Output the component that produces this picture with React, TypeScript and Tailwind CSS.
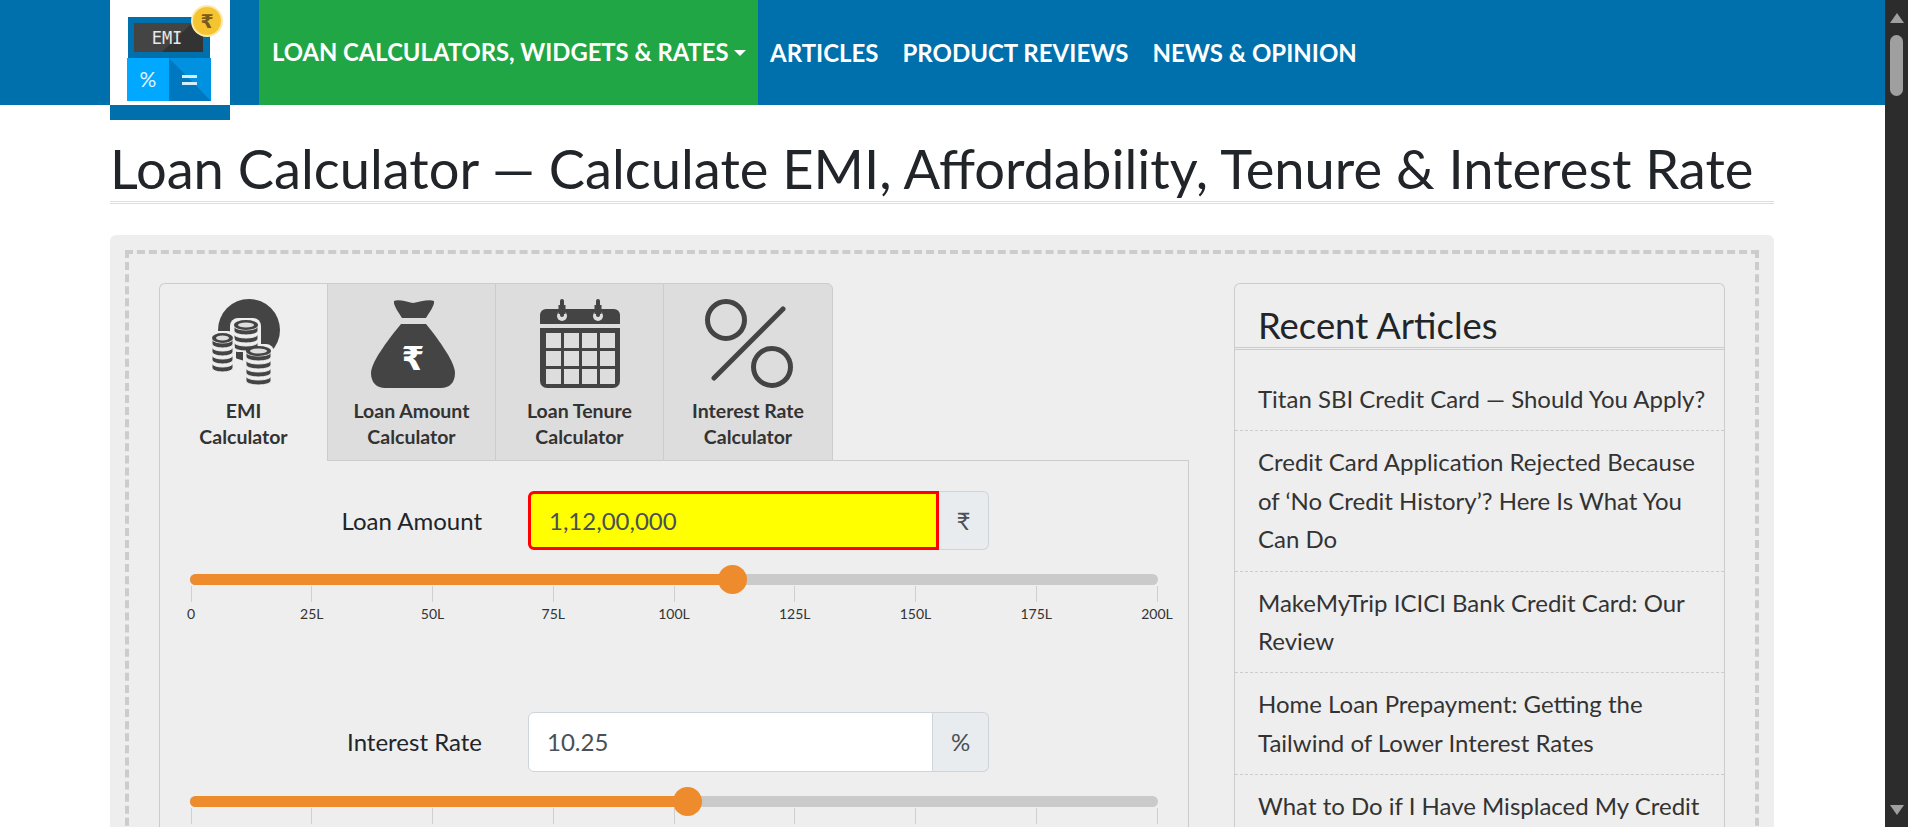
const tabs = [
  { id: 'emi', lines: ['EMI', 'Calculator'] },
  { id: 'amount', lines: ['Loan Amount', 'Calculator'] },
  { id: 'tenure', lines: ['Loan Tenure', 'Calculator'] },
  { id: 'rate', lines: ['Interest Rate', 'Calculator'] },
];

const articles = [
  'Titan SBI Credit Card — Should You Apply?',
  'Credit Card Application Rejected Because of ‘No Credit History’? Here Is What You Can Do',
  'MakeMyTrip ICICI Bank Credit Card: Our Review',
  'Home Loan Prepayment: Getting the Tailwind of Lower Interest Rates',
  'What to Do if I Have Misplaced My Credit Card?',
];

const ticks = ['0', '25L', '50L', '75L', '100L', '125L', '150L', '175L', '200L'];

function Logo() {
  return (
    <svg viewBox="0 0 120 105" className="w-[120px] h-[105px] block">
      <rect x="18" y="17" width="82" height="42" fill="#0070ad" />
      <rect x="24" y="23" width="69" height="29" fill="#444444" />
      <polygon points="93,23 93,52 52,52 82,23" fill="#333333" />
      <text x="57" y="44" textAnchor="middle" fontFamily="'DejaVu Sans Mono', monospace" fontSize="17" fill="#e8e8e8">EMI</text>
      <rect x="17" y="58" width="42" height="43" fill="#00a8ff" />
      <rect x="59" y="58" width="42" height="43" fill="#0092e0" />
      <polygon points="59,58 101,101 59,101" fill="#0078c0" />
      <text x="38" y="87" textAnchor="middle" fontFamily="Lato, sans-serif" fontSize="21" fill="#e6f6ff">%</text>
      <rect x="72" y="75" width="15" height="3" fill="#d6eefc" />
      <rect x="72" y="82" width="15" height="3" fill="#d6eefc" />
      <circle cx="97" cy="21" r="16" fill="#fdeaa8" />
      <circle cx="97" cy="21" r="14" fill="#f7c431" />
      <text x="97" y="28" textAnchor="middle" fontFamily="'DejaVu Sans', sans-serif" fontWeight="700" fontSize="19" fill="#7a5a1e">₹</text>
    </svg>
  );
}

function CoinStack({ x, y, w, coins }: { x: number; y: number; w: number; coins: number }) {
  const rx = w / 2;
  const cx = x + rx;
  const rows = Array.from({ length: coins }, (_, i) => coins - 1 - i);
  return (
    <g>
      {rows.map((i) => (
        <g key={i}>
          <rect x={x - 1.5} y={y + 5 + i * 8} width={w + 3} height="9" fill="#eeeeee" />
          <path
            d={`M${x} ${y + 6 + i * 8} v5 a${rx} 4 0 0 0 ${w} 0 v-5 a${rx} 4 0 0 1 -${w} 0 Z`}
            fill="#444444"
            stroke="#eeeeee"
            strokeWidth="1"
          />
        </g>
      ))}
      <ellipse cx={cx} cy={y + 5} rx={rx} ry="5" fill="#444444" />
      <ellipse cx={cx} cy={y + 5} rx={rx - 4} ry="2.6" fill="#dddddd" />
    </g>
  );
}

function CoinsIcon() {
  return (
    <svg viewBox="0 0 90 90" className="w-[90px] h-[90px]">
      <circle cx="50" cy="31" r="31" fill="#444444" />
      <rect x="31" y="19" width="31" height="34" rx="8" fill="#eeeeee" />
      <rect x="10" y="32" width="27" height="42" rx="8" fill="#eeeeee" />
      <rect x="44" y="45" width="31" height="45" rx="8" fill="#eeeeee" />
      <CoinStack x={35} y={21} w={24} coins={3} />
      <CoinStack x={13} y={34} w={21} coins={4} />
      <CoinStack x={47} y={47} w={25} coins={4} />
    </svg>
  );
}

function BagIcon() {
  return (
    <svg viewBox="0 0 90 90" className="w-[90px] h-[90px]">
      <path d="M27 2 C32 0 40 3 46 4 C52 3 62 0 67 2 C68 6 62 14 59 19 L35 19 C32 14 26 6 27 2 Z" fill="#444444" />
      <path d="M34 25 L59 25 C68 36 88 62 88 74 C88 84 82 89 74 89 L18 89 C10 89 4 84 4 74 C4 62 25 36 34 25 Z" fill="#444444" />
      <text x="46" y="71" textAnchor="middle" fontFamily="'DejaVu Sans', sans-serif" fontWeight="700" fontSize="33" fill="#ffffff">₹</text>
    </svg>
  );
}

function CalendarIcon() {
  const cols = [11, 29, 47, 65];
  const rows = [34, 52, 70];
  return (
    <svg viewBox="0 0 90 90" className="w-[90px] h-[90px]">
      <path d="M5 25 V16 a6 6 0 0 1 6 -6 H79 a6 6 0 0 1 6 6 V25 Z" fill="#444444" />
      <path d="M5 29 H85 V82 a7 7 0 0 1 -7 7 H12 a7 7 0 0 1 -7 -7 Z" fill="#444444" />
      {rows.map((r) =>
        cols.map((c) => <rect key={`${r}-${c}`} x={c} y={r} width="15" height="15" fill="#dddddd" />),
      )}
      {[27, 63].map((x) => (
        <g key={x}>
          <circle cx={x} cy="17" r="5" fill="#dddddd" />
          <rect x={x - 3.5} y="6" width="7" height="9" fill="#444444" />
          <rect x={x - 2} y="0" width="4" height="18" rx="2" fill="#444444" />
        </g>
      ))}
    </svg>
  );
}

function PercentIcon() {
  return (
    <svg viewBox="0 0 90 90" className="w-[90px] h-[90px]" fill="none" stroke="#444444" strokeWidth="5">
      <circle cx="23" cy="21" r="18.5" />
      <circle cx="69" cy="68" r="18.5" />
      <line x1="80" y1="10" x2="11" y2="79" strokeLinecap="round" />
    </svg>
  );
}

function TabIcon({ id }: { id: string }) {
  if (id === 'emi') return <CoinsIcon />;
  if (id === 'amount') return <BagIcon />;
  if (id === 'tenure') return <CalendarIcon />;
  return <PercentIcon />;
}

function tabClass(i: number) {
  if (i === 0) {
    return 'w-[168px] h-[178px] pt-[15px] bg-[#eeeeee] border-t border-l border-[#cccccc] rounded-tl-[6px] flex flex-col items-center';
  }
  if (i === 3) {
    return 'w-[170px] h-[178px] pt-[15px] bg-[#dddddd] border border-[#cccccc] rounded-tr-[6px] flex flex-col items-center';
  }
  return 'w-[168px] h-[178px] pt-[15px] bg-[#dddddd] border-t border-l border-b border-[#cccccc] flex flex-col items-center';
}

function Slider({ value, labels }: { value: number; labels: boolean }) {
  return (
    <div className="mt-[24px] w-[968px] ml-[30px]">
      <div className="relative h-[11px] rounded-full bg-[#cacaca]">
        <div className="h-full rounded-full bg-[#ee8b2d]" style={{ width: `${value}%` }} />
        <div
          className="absolute top-[-9px] w-[29px] h-[29px] -ml-[14px] rounded-full bg-[#ee8b2d]"
          style={{ left: `${value}%` }}
        />
      </div>
      <div className="flex justify-between px-[1px] mt-[1px]">
        {ticks.map((t) => (
          <div key={t} className="w-0 flex flex-col items-center">
            <div className="w-[1px] h-[16px] bg-[#cfcfcf] shrink-0" />
            {labels && <div className="mt-[3px] text-[14px] leading-[18px] text-[#333333]">{t}</div>}
          </div>
        ))}
      </div>
    </div>
  );
}

export default function App() {
  return (
    <div className="flex h-[827px] overflow-hidden bg-white font-[Lato,sans-serif] text-[#212529]">
      <div className="flex-1 min-w-0">
        <header className="h-[105px] bg-[#0070ad] pl-[110px] flex items-start">
          <div className="w-[120px] h-[120px] bg-[#0070ad] shrink-0 relative z-10">
            <div className="bg-white h-[105px]">
              <Logo />
            </div>
          </div>
          <nav className="ml-[29px] flex text-[24px] font-bold text-white h-[105px] items-center">
            <a className="h-full w-[499px] bg-[#21a645] pl-[13px] flex items-center whitespace-nowrap text-[23.8px]">
              LOAN CALCULATORS, WIDGETS &amp; RATES
              <span className="ml-[5px] mt-[1px] border-x-[6.5px] border-x-transparent border-t-[6px] border-t-white" />
            </a>
            <a className="px-[12px]">ARTICLES</a>
            <a className="px-[12px]">PRODUCT REVIEWS</a>
            <a className="px-[12px]">NEWS &amp; OPINION</a>
          </nav>
        </header>

        <main className="mx-[110px] w-[1664px]">
          <h1 className="mt-[32px] pb-[2px] text-[54.25px] leading-[62px] font-normal whitespace-nowrap border-b-[3px] border-double border-[#dddddd]">
            Loan Calculator — Calculate EMI, Affordability, Tenure &amp; Interest Rate
          </h1>

          <div className="mt-[31px] rounded-[6px] bg-[#eeeeee] p-[15px] pb-0">
            <div className="border-[4px] border-dashed border-[#cccccc] pt-[29px] pl-[30px] pr-[30px] flex h-[600px]">
              <section className="w-[1030px] shrink-0">
                <div className="flex">
                  {tabs.map((tab, i) => (
                    <div key={tab.id} className={tabClass(i)}>
                      <TabIcon id={tab.id} />
                      <div className="mt-[9px] text-[19.5px] leading-[26px] font-bold text-center whitespace-nowrap text-[#333333]">
                        {tab.lines.map((l) => (
                          <div key={l}>{l}</div>
                        ))}
                      </div>
                    </div>
                  ))}
                  <div className="flex-1 border-b border-[#cccccc]" />
                </div>

                <div className="border-l border-r border-[#cccccc] h-[400px] pt-[30px]">
                  <div className="flex items-center">
                    <label className="w-[322px] text-right text-[24px]">Loan Amount</label>
                    <div className="ml-[46px] flex h-[59px] w-[461px]">
                      <div className="flex-1 flex items-center pl-[18px] bg-[#ffff00] border-[3px] border-[#ff0000] rounded-l-[6px] text-[24px] text-[#495057]">
                        1,12,00,000
                      </div>
                      <div className="w-[50px] flex items-center justify-center bg-[#e9ecef] border border-l-0 border-[#ced4da] rounded-r-[6px] text-[24px] text-[#495057]">
                        ₹
                      </div>
                    </div>
                  </div>
                  <Slider value={56} labels />

                  <div className="flex items-center mt-[89px]">
                    <label className="w-[322px] text-right text-[24px]">Interest Rate</label>
                    <div className="ml-[46px] flex h-[60px] w-[461px]">
                      <div className="flex-1 flex items-center pl-[18px] bg-white border border-[#ced4da] rounded-l-[6px] text-[24px] text-[#495057]">
                        10.25
                      </div>
                      <div className="w-[56px] flex items-center justify-center bg-[#e9ecef] border border-l-0 border-[#ced4da] rounded-r-[6px] text-[24px] text-[#495057]">
                        %
                      </div>
                    </div>
                  </div>
                  <Slider value={51.3} labels={false} />
                </div>
              </section>

              <aside className="ml-[45px] w-[493px] border border-[#cccccc] rounded-t-[6px] border-b-0 h-[600px]">
                <h3 className="pl-[23px] pt-[20px] text-[36.4px] leading-[43px] font-normal border-b-[3px] border-double border-[#cccccc]">
                  Recent Articles
                </h3>
                <ul className="mt-[18px]">
                  {articles.map((a) => (
                    <li key={a} className="pl-[23px] pr-[16px] py-[12px] text-[24px] leading-[38.4px] text-[#333333] border-b border-dashed border-[#cccccc]">
                      {a}
                    </li>
                  ))}
                </ul>
              </aside>
            </div>
          </div>
        </main>
      </div>

      <div className="w-[23px] shrink-0 bg-[#2c2c2c] flex flex-col items-center justify-between pt-[13px] pb-[12px]">
        <div className="w-full flex flex-col items-center">
          <span className="border-x-[7.5px] border-x-transparent border-b-[10px] border-b-[#a0a0a0]" />
          <div className="w-[13px] h-[61px] bg-[#9f9f9f] rounded-full mt-[12px]" />
        </div>
        <span className="border-x-[7.5px] border-x-transparent border-t-[10px] border-t-[#a0a0a0]" />
      </div>
    </div>
  );
}
